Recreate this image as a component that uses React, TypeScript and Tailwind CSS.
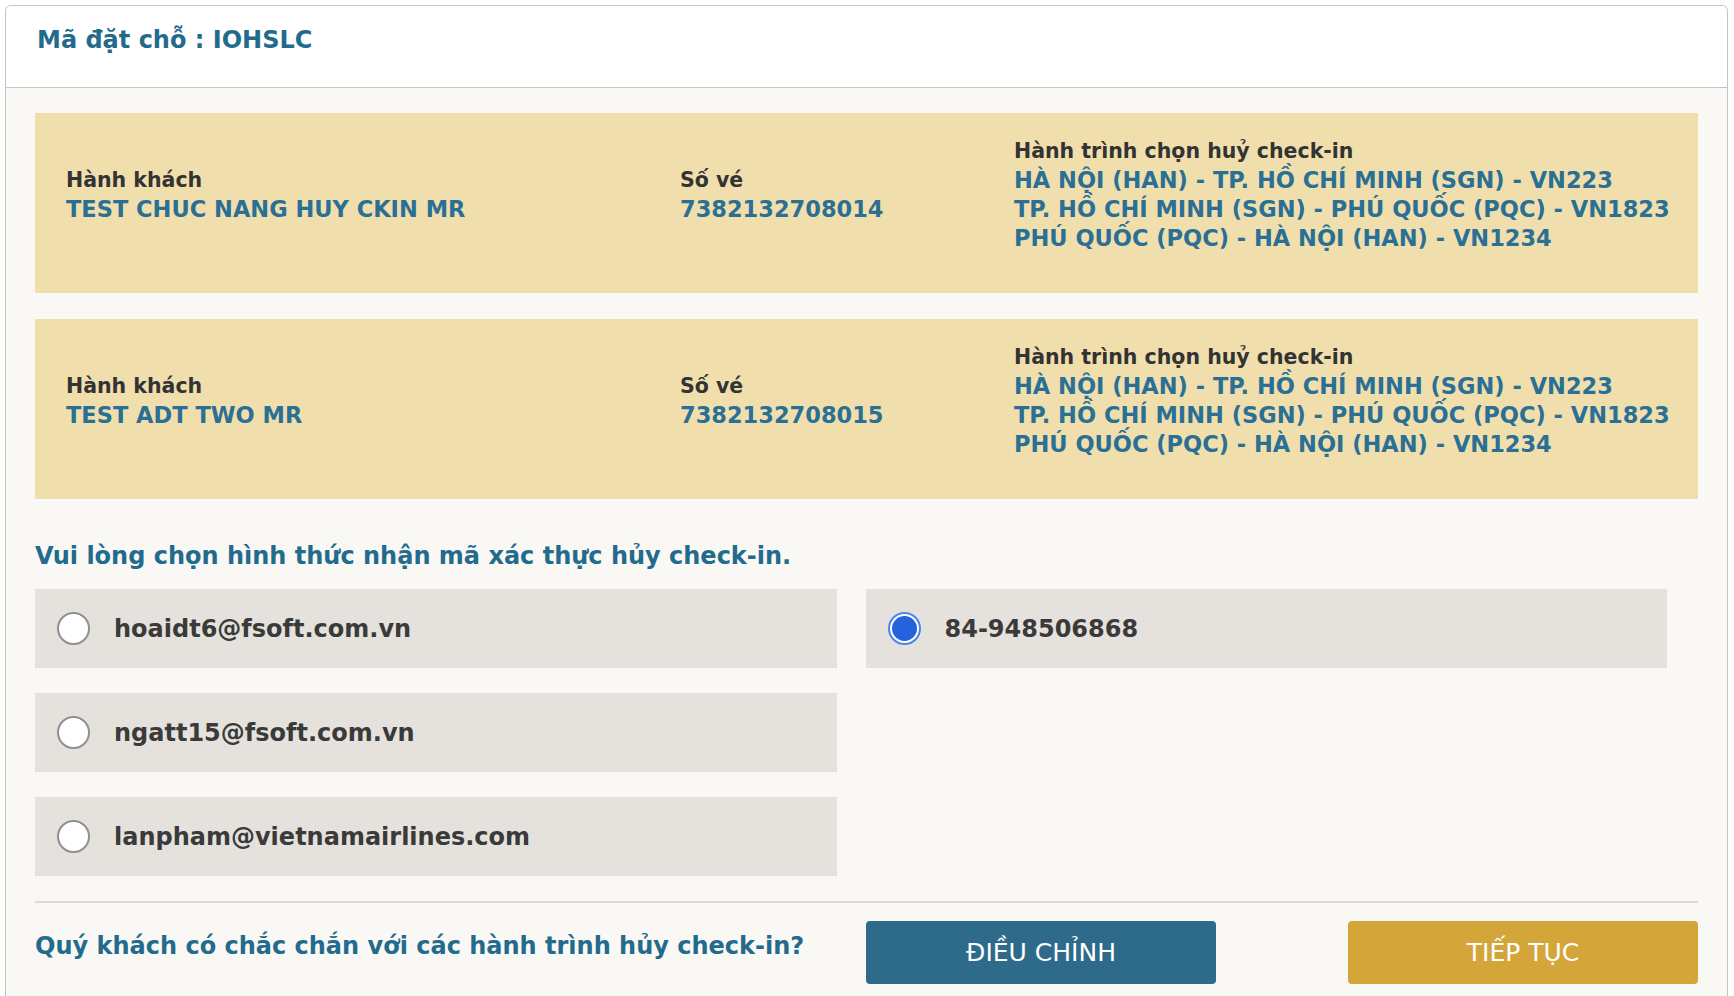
const passengers = [
  {
    name: "TEST CHUC NANG HUY CKIN MR",
    ticket: "7382132708014",
    routes: [
      "HÀ NỘI (HAN) - TP. HỒ CHÍ MINH (SGN) - VN223",
      "TP. HỒ CHÍ MINH (SGN) - PHÚ QUỐC (PQC) - VN1823",
      "PHÚ QUỐC (PQC) - HÀ NỘI (HAN) - VN1234",
    ],
  },
  {
    name: "TEST ADT TWO MR",
    ticket: "7382132708015",
    routes: [
      "HÀ NỘI (HAN) - TP. HỒ CHÍ MINH (SGN) - VN223",
      "TP. HỒ CHÍ MINH (SGN) - PHÚ QUỐC (PQC) - VN1823",
      "PHÚ QUỐC (PQC) - HÀ NỘI (HAN) - VN1234",
    ],
  },
];

const emails = ["hoaidt6@fsoft.com.vn", "ngatt15@fsoft.com.vn", "lanpham@vietnamairlines.com"];

function Radio({ checked }: { checked?: boolean }) {
  if (checked) {
    return (
      <span className="flex h-[33px] w-[33px] shrink-0 items-center justify-center rounded-full border-2 border-[#4a86f0] bg-white">
        <span className="h-[25px] w-[25px] rounded-full bg-[#2563dc]" />
      </span>
    );
  }
  return <span className="h-[33px] w-[33px] shrink-0 rounded-full border-2 border-[#8f8f8f] bg-white" />;
}

function Option({ label, checked }: { label: string; checked?: boolean }) {
  return (
    <div className="flex h-[79px] items-center gap-[24px] bg-[#e5e2dd] pl-[22px]">
      <Radio checked={checked} />
      <span className="text-[24px] font-bold text-[#3a3a3a]">{label}</span>
    </div>
  );
}

export default function App() {
  return (
    <div
      className="min-h-screen bg-white px-[5px] pt-[5px]"
      style={{ fontFamily: '"DejaVu Sans", "Open Sans", sans-serif' }}
    >
      <div className="w-[1723px] overflow-hidden rounded-t-[6px] border border-b-0 border-[#c4c4c4]">
        <div className="h-[82px] border-b border-[#c4c4c4] bg-white pl-[31px] pt-[19px]">
          <h1 className="text-[24px] font-bold leading-[30px] text-[#236b8c]">Mã đặt chỗ : IOHSLC</h1>
        </div>

        <div className="bg-[#f9f8f4] px-[29px] pb-[40px] pt-[25px]">
          <div className="flex flex-col gap-[26px]">
            {passengers.map((p) => (
              <div
                key={p.ticket}
                className="grid grid-cols-[614px_334px_1fr] items-center bg-[#f0dfac] pb-[40px] pl-[31px] pt-[24px] leading-[29px]"
              >
                <div>
                  <div className="text-[20.5px] font-bold text-[#333333]">Hành khách</div>
                  <div className="text-[22.5px] font-bold text-[#2b7094]">{p.name}</div>
                </div>
                <div>
                  <div className="text-[20.5px] font-bold text-[#333333]">Số vé</div>
                  <div className="text-[22.5px] font-bold text-[#2b7094]">{p.ticket}</div>
                </div>
                <div>
                  <div className="text-[20.5px] font-bold text-[#333333]">Hành trình chọn huỷ check-in</div>
                  {p.routes.map((r) => (
                    <div key={r} className="whitespace-nowrap text-[22.5px] font-bold text-[#2b7094]">
                      {r}
                    </div>
                  ))}
                </div>
              </div>
            ))}
          </div>

          <p className="mt-[42px] text-[24px] font-bold leading-[30px] text-[#236b8c]">
            Vui lòng chọn hình thức nhận mã xác thực hủy check-in.
          </p>

          <div className="mt-[18px] grid w-[1632px] grid-cols-2 gap-x-[29px]">
            <div className="flex flex-col gap-[25px]">
              {emails.map((e) => (
                <Option key={e} label={e} />
              ))}
            </div>
            <div>
              <Option label="84-948506868" checked />
            </div>
          </div>

          <div className="mt-[25px] border-t-2 border-[#dcdad5]" />

          <div className="mt-[18px] grid grid-cols-[831px_350px_1fr] items-center">
            <p className="pb-[14px] text-[24px] font-bold text-[#236b8c]">
              Quý khách có chắc chắn với các hành trình hủy check-in?
            </p>
            <button className="h-[63px] rounded-[4px] bg-[#2e6b8a] text-[25px] text-white">
              ĐIỀU CHỈNH
            </button>
            <div className="flex justify-end">
              <button className="h-[63px] w-[350px] rounded-[4px] bg-[#d4a63a] text-[25px] text-white">
                TIẾP TỤC
              </button>
            </div>
          </div>
        </div>
      </div>
    </div>
  );
}
